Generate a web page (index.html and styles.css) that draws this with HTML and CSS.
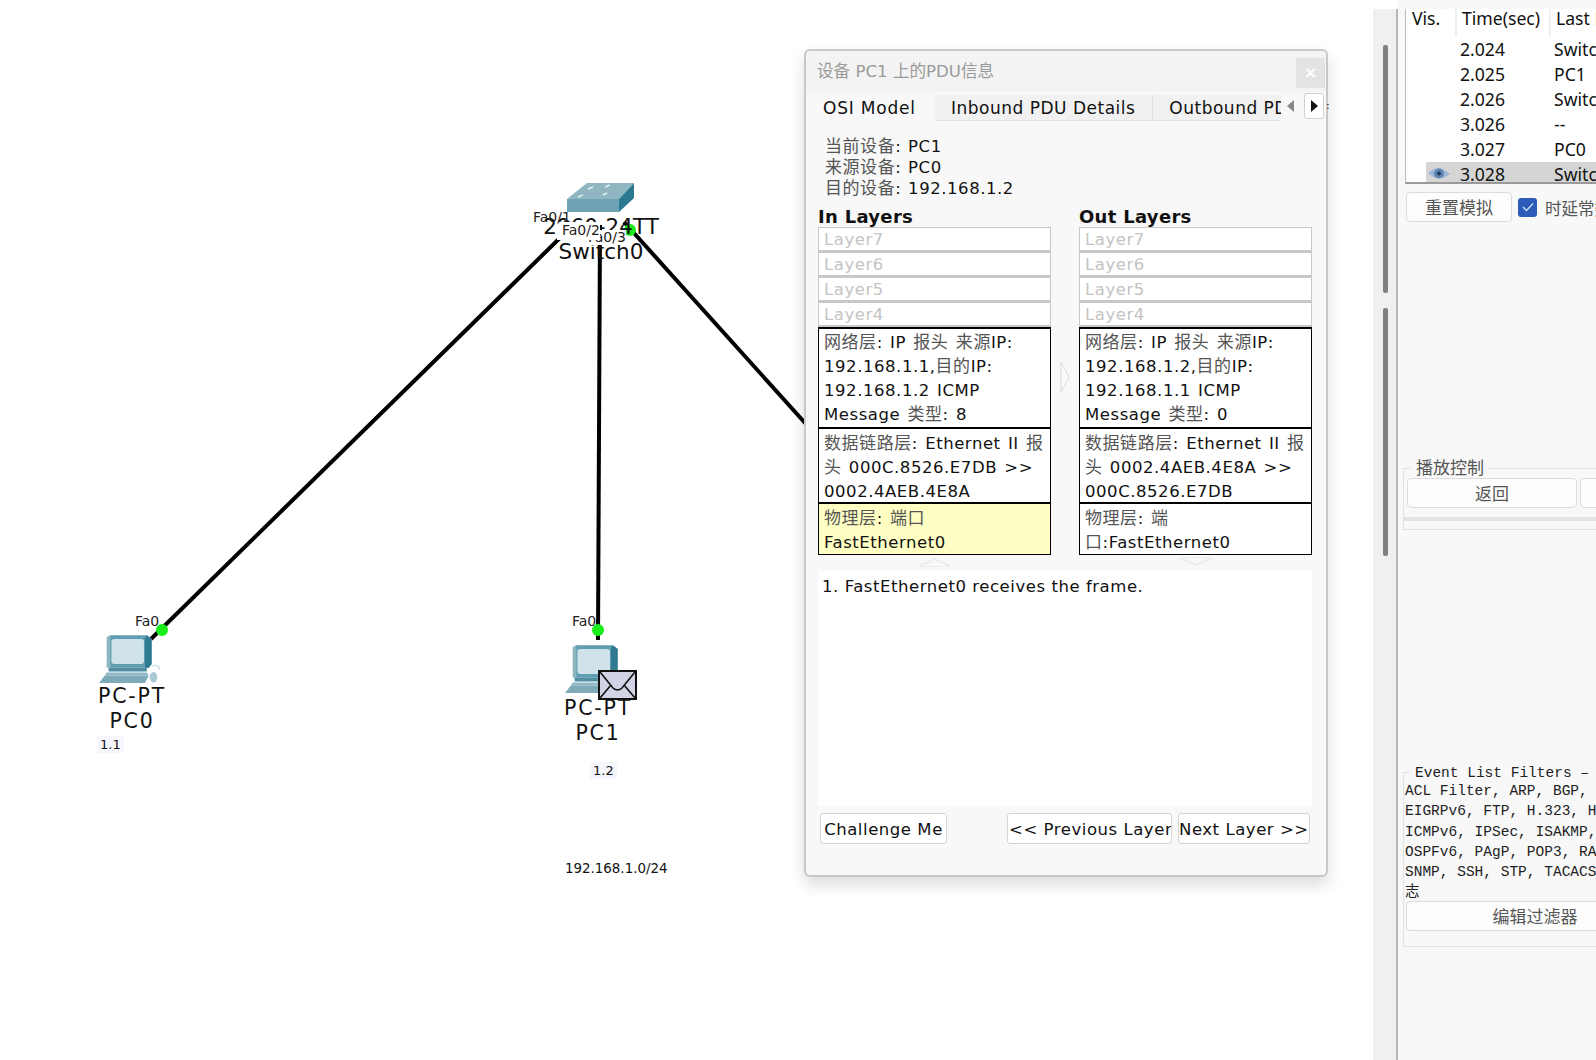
FILE: index.html
```html
<!DOCTYPE html>
<html lang="zh">
<head>
<meta charset="utf-8">
<title>Packet Tracer</title>
<link rel="stylesheet" href="styles.css">
</head>
<body>
<svg width="0" height="0" class="defs">
  <symbol id="pc" viewBox="0 0 70 56">
    <path d="M11 0H50L55 4V30L52 34H11Z" fill="#5f9db0"/>
    <path d="M50 0L55 4V30L52 34H48V3Z" fill="#2f7a90"/>
    <rect x="13" y="4" width="34" height="26" rx="3" fill="#cfe2e9"/>
    <path d="M8 2L12 0V34H8Z" fill="#8db6c3"/>
    <path d="M10 34H50V38H10Z" fill="#4f8ea3"/>
    <path d="M8 39H50L52 42H6Z" fill="#8fb9c6"/>
    <path d="M6 42H52L48 50H0Z" fill="#7fabb9"/>
    <path d="M56 32Q63 30 63 36" fill="none" stroke="#c8dbe1" stroke-width="1.5"/>
    <ellipse cx="57" cy="44" rx="4" ry="5.5" fill="#a9c8d2"/>
  </symbol>
</svg>

<main class="canvas">
  <svg class="links" width="1373" height="1060">
    <path class="link" d="M151 639L566 232"/>
    <path class="link" d="M600 225L598 640"/>
    <path class="link" d="M624 222L806 424"/>
    <circle class="dot" cx="162" cy="630" r="6"/>
    <circle class="dot" cx="598" cy="630" r="6"/>
    <circle class="dot" cx="630" cy="230" r="6"/>
    <path d="M567 199L587 183H634L619 199Z" fill="#8fb6c1"/>
    <path d="M567 199H619V212H567Z" fill="#6ea3b6"/>
    <path d="M619 199L634 183V198L619 212Z" fill="#2c7a91"/>
    <path d="M578 197l5-2m5-6l5-2m10 8l4-2m-2-6l5-2" stroke="#e3eef2" stroke-width="1.6" fill="none"/>
    <use href="#pc" x="99" y="635" width="67" height="54"/>
    <use href="#pc" x="565" y="645" width="67" height="54"/>
  </svg>

  <div class="node name sw-model">2960-24TT</div>
  <div class="node name sw-name">Switch0</div>
  <div class="node port p3">Fa0/3</div>
  <div class="node port p2">Fa0/2</div>
  <div class="node port p1">Fa0/1</div>

  <div class="node name pc pc0a">PC-PT</div>
  <div class="node name pc pc0b">PC0</div>
  <div class="node port p4">Fa0</div>
  <div class="node note n1">1.1</div>

  <div class="node name pc pc1a">PC-PT</div>
  <div class="node name pc pc1b">PC1</div>
  <div class="node port p5">Fa0</div>
  <div class="node note n2">1.2</div>
  <div class="node net">192.168.1.0/24</div>

  <svg class="node env" width="39" height="30" viewBox="0 0 39 30">
    <rect x="1" y="1" width="37" height="28" fill="#d3d3e6" stroke="#111" stroke-width="2"/>
    <path d="M2 2L15 18Q19.500 22 24 18L37 2M2 28L13 15M37 28L26 15" fill="none" stroke="#111" stroke-width="1.600"/>
  </svg>

  <section class="dialog">
    <header class="dialog-title">
      <span>设备 PC1 上的PDU信息</span>
      <span class="close">×</span>
    </header>
    <nav class="tabbar">
      <div class="tabs">
        <span class="tab active">OSI Model</span>
        <span class="tab">Inbound PDU Details</span>
        <span class="tab">Outbound PDU Details</span>
      </div>
      <span class="arrow off"><svg width="8" height="12"><path d="M7 0V12L0 6Z" fill="#888"/></svg></span>
      <span class="arrow"><svg width="8" height="12"><path d="M1 0V12L8 6Z" fill="#111"/></svg></span>
      <span class="tab-rest">:</span>
    </nav>
    <div class="body">
      <div class="device"><span class="zh">当前设备</span>: PC1<br><span class="zh">来源设备</span>: PC0<br><span class="zh">目的设备</span>: 192.168.1.2</div>
      <div class="layers">
        <div class="col">
          <h3>In Layers</h3>
          <div class="layer empty">Layer7</div>
          <div class="layer empty">Layer6</div>
          <div class="layer empty">Layer5</div>
          <div class="layer empty">Layer4</div>
          <div class="layer net4"><span class="zh">网络层</span>: IP <span class="zh">报头 来源</span>IP:<br>192.168.1.1,<span class="zh">目的</span>IP:<br>192.168.1.2 ICMP<br>Message <span class="zh">类型</span>: 8</div>
          <div class="layer link3"><span class="zh">数据链路层</span>: Ethernet II <span class="zh">报</span><br><span class="zh">头</span> 000C.8526.E7DB &gt;&gt;<br>0002.4AEB.4E8A</div>
          <div class="layer phy2 selected"><span class="zh">物理层</span>: <span class="zh">端口</span><br>FastEthernet0</div>
          <svg class="chev" width="32" height="10"><path d="M0 10H32V8L16 1L0 8Z" fill="#ececec"/><path d="M3 9L16 3L29 9" fill="#f8f8f8"/></svg>
        </div>
        <div class="mid">
          <svg width="10" height="32"><path d="M1 1L9 16L1 31Z" fill="#fbfbfb" stroke="#dcdcdc"/></svg>
        </div>
        <div class="col">
          <h3>Out Layers</h3>
          <div class="layer empty">Layer7</div>
          <div class="layer empty">Layer6</div>
          <div class="layer empty">Layer5</div>
          <div class="layer empty">Layer4</div>
          <div class="layer net4"><span class="zh">网络层</span>: IP <span class="zh">报头 来源</span>IP:<br>192.168.1.2,<span class="zh">目的</span>IP:<br>192.168.1.1 ICMP<br>Message <span class="zh">类型</span>: 0</div>
          <div class="layer link3"><span class="zh">数据链路层</span>: Ethernet II <span class="zh">报</span><br><span class="zh">头</span> 0002.4AEB.4E8A &gt;&gt;<br>000C.8526.E7DB</div>
          <div class="layer phy2"><span class="zh">物理层</span>: <span class="zh">端</span><br><span class="zh">口</span>:FastEthernet0</div>
          <svg class="chev" width="32" height="10"><path d="M0 0H32V2L16 9L0 2Z" fill="#ececec"/><path d="M3 1L16 7L29 1" fill="#f8f8f8"/></svg>
        </div>
      </div>
      <div class="desc">1. FastEthernet0 receives the frame.</div>
      <div class="actions">
        <button class="btn challenge">Challenge Me</button>
        <button class="btn prev"><span>&lt;&lt; Previous Layer</span></button>
        <button class="btn next"><span>Next Layer &gt;&gt;</span></button>
      </div>
    </div>
  </section>
</main>

<div class="strip">
  <div class="thumb t1"></div>
  <div class="thumb t2"></div>
</div>

<aside class="panel">
  <div class="inner">
    <div class="events">
      <div class="row head"><span class="vis">Vis.</span><span class="time">Time(sec)</span><span class="last">Last Device</span></div>
      <div class="row"><span class="vis"></span><span class="time">2.024</span><span class="last">Switch0</span></div>
      <div class="row"><span class="vis"></span><span class="time">2.025</span><span class="last">PC1</span></div>
      <div class="row"><span class="vis"></span><span class="time">2.026</span><span class="last">Switch0</span></div>
      <div class="row"><span class="vis"></span><span class="time">3.026</span><span class="last">--</span></div>
      <div class="row"><span class="vis"></span><span class="time">3.027</span><span class="last">PC0</span></div>
      <div class="row current"><span class="vis"><svg width="22" height="14" viewBox="0 0 22 14"><path d="M0 6Q10 -4 22 7Q11 16 0 6Z" fill="#9db8d6"/><ellipse cx="11" cy="6.500" rx="5" ry="5" fill="#5f84b4"/><circle cx="11" cy="6.500" r="2" fill="#22385a"/></svg></span><span class="time">3.028</span><span class="last">Switch0</span></div>
    </div>
    <div class="sim-row">
      <button class="pbtn reset">重置模拟</button>
      <span class="check"><svg width="12" height="10"><path d="M1 5L4.500 8.500L11 1.500" fill="none" stroke="#cfe0f7" stroke-width="1.300"/></svg></span>
      <span class="check-label">时延常数</span>
    </div>
    <div class="group play">
      <span class="legend">播放控制</span>
      <div class="play-row">
        <button class="pbtn back">返回</button>
        <button class="pbtn forward">前进</button>
      </div>
      <div class="rail"></div>
    </div>
    <div class="group filters">
      <span class="legend mono-legend">Event List Filters – Visible Events</span>
      <div class="filter-text">ACL Filter, ARP, BGP, CAPWAP, CDP, DHCP<br>EIGRPv6, FTP, H.323, HSRP, HTTP, ICMP,<br>ICMPv6, IPSec, ISAKMP, LACP, NTP, OSPF,<br>OSPFv6, PAgP, POP3, RADIUS, RIP, SCCP,<br>SNMP, SSH, STP, TACACS, TCP, TFTP, 系统日<br>志</div>
      <button class="pbtn edit">编辑过滤器</button>
    </div>
  </div>
</aside>
</body>
</html>
```

FILE: styles.css
```css
* { box-sizing: border-box; }
html, body { margin: 0; height: 1060px; overflow: hidden; }
body { display: flex; background: #fff; font-family: "DejaVu Sans", "Noto Sans CJK SC", sans-serif; color: #111; }
.defs { position: absolute; }
.zh { color: #555; font-size: 17px; line-height: 0; }

.canvas { position: relative; flex: 0 0 1373px; height: 1060px; background: #fff; }
.links { position: absolute; left: 0; top: 0; }
.link { stroke: #000; stroke-width: 4; fill: none; }
.dot { fill: #1aee1a; }
.node { position: absolute; white-space: nowrap; }
.name { font-size: 21.500px; line-height: 24px; color: #111; transform: translateX(-50%); }
.sw-model { left: 601px; top: 215px; }
.sw-name { left: 601px; top: 240px; }
.pc { font-size: 20.500px; letter-spacing: 1.800px; }
.pc0a { left: 132px; top: 684px; }
.pc0b { left: 132px; top: 709px; }
.pc1a { left: 598px; top: 696px; }
.pc1b { left: 598px; top: 721px; }
.port { font-size: 14px; line-height: 15px; color: #222; }
.p1 { left: 533px; top: 210px; }
.p2 { left: 557px; top: 222px; height: 18px; background: #fff; padding: 1px 0 0 5px; }
.p3 { left: 588px; top: 230px; background: #fff; }
.p4 { left: 135px; top: 614px; }
.p5 { left: 572px; top: 614px; }
.note { font-size: 13px; line-height: 17px; padding: 0 3px; background: #f6f6fd; }
.n1 { left: 97px; top: 736px; }
.n2 { left: 590px; top: 762px; }
.net { left: 565px; top: 861px; font-size: 13.400px; line-height: 16px; }
.env { left: 598px; top: 670px; }

.dialog { position: absolute; left: 804px; top: 49px; width: 524px; height: 828px; display: flex; flex-direction: column; background: #f8f8f8; border: 2px solid #c8c8c8; border-radius: 6px; box-shadow: 0 8px 16px rgba(0,0,0,.14); }
.dialog-title { flex: 0 0 41px; display: flex; align-items: flex-start; justify-content: space-between; padding: 11px 1px 0 11px; background: #f3f3f3; border-radius: 6px 6px 0 0; font-size: 16.600px; line-height: 20px; color: #9a9a9a; }
.close { width: 29px; height: 30px; margin-top: -4px; background: #e3e3e3; color: #fff; font-size: 16px; line-height: 30px; text-align: center; font-weight: bold; }
.tabbar { flex: 0 0 31px; display: flex; align-items: flex-start; font-size: 17px; line-height: 26px; letter-spacing: .5px; }
.tabs { flex: 0 0 475px; display: flex; overflow: hidden; height: 29px; align-items: flex-end; }
.tab { flex: none; height: 26px; padding: 0 17px 0 16px; background: #f1f1f1; border-right: 1px solid #e4e4e4; border-bottom: 1px solid #e4e4e4; white-space: nowrap; }
.tab.active { height: 29px; padding: 0 0 0 17px; background: #f8f8f8; border: 0; line-height: 32px; width: 129px; letter-spacing: .8px; }
.arrow { flex: 0 0 20px; height: 26px; margin: 1px 2px 0 0; display: flex; align-items: center; justify-content: center; background: #f8f8f8; border-radius: 3px; }
.arrow.off { margin-right: 3px; }
.arrow:not(.off) { background: #fff; border: 1px solid #d0d0d0; }
.tab-rest { flex: none; font-size: 11px; line-height: 28px; }
.body { flex: 1; padding: 0 14px 0 12px; display: flex; flex-direction: column; min-height: 0; }
.device { margin: 13px 0 0 7px; font-size: 16.500px; line-height: 21px; letter-spacing: .55px; word-spacing: 1px; height: 63px; }
.layers { display: grid; grid-template-columns: 233px 28px 233px; margin-top: 8px; }
.col { display: flex; flex-direction: column; }
.col h3 { margin: 0; font-size: 18px; line-height: 19px; height: 20px; font-weight: bold; letter-spacing: .3px; }
.layer { background: #fff; padding: 0 5px; border: 1px solid #000; font-size: 16.500px; line-height: 24px; white-space: nowrap; letter-spacing: .55px; word-spacing: 1.500px; overflow: hidden; margin-top: -1px; }
.layer.empty { height: 25px; margin-top: 0; border: 1px solid #c8c8c8; border-width: 1px 1px 2px; color: #c4c4c4; line-height: 24px; }
.net4 { height: 101px; margin-top: 0; border-width: 2px 1px 1px; padding-top: 2px; }
.link3 { height: 76px; padding-top: 3px; border-width: 2px 1px 1px; }
.phy2 { height: 53px; padding-top: 3px; border-width: 2px 1px 1px; }
.selected { background: #ffffc4; }
.chev { align-self: center; margin-top: 2px; }
.mid { display: flex; justify-content: center; padding-top: 154px; }
.desc { flex: 0 0 235px; margin-top: 4px; padding: 5px 4px; background: #fff; font-size: 16.500px; line-height: 22px; letter-spacing: .55px; }
.actions { display: flex; padding: 7px 2px 0; }
.btn { height: 31px; padding: 0; background: #fff; border: 1px solid #d4d4d4; border-radius: 3px; font: 16.500px/31px "DejaVu Sans", sans-serif; letter-spacing: .55px; color: #111; white-space: nowrap; overflow: hidden; display: flex; justify-content: center; }
.challenge { width: 127px; margin-right: 60px; }
.prev { width: 165px; margin-right: 6px; justify-content: flex-start; padding-left: 1px; }
.next { width: 132px; justify-content: flex-start; }

.strip { position: relative; flex: 0 0 25px; margin-top: 9px; background: #f0f0f0; border-right: 2px solid #b4b8ba; }
.thumb { position: absolute; left: 10px; width: 5px; background: #808080; border-radius: 2px; }
.t1 { top: 36px; height: 248px; }
.t2 { top: 299px; height: 248px; }

.panel { flex: 1; min-width: 0; overflow: hidden; background: #f8f8f8; padding: 9px 0 0 7px; }
.inner { width: 420px; font-family: "Noto Sans", "Noto Sans CJK SC", sans-serif; }
.events { height: 175px; background: #fff; border-bottom: 2px solid #9a9a9a; border-left: 1px solid #bbb; overflow: hidden; font-size: 17.600px; }
.row { display: flex; height: 25px; line-height: 24px; }
.head { height: 28px; line-height: 18px; color: #111; }
.vis { flex: 0 0 49px; padding-left: 6px; }
.time { flex: 0 0 94px; padding-left: 5px; }
.last { flex: 1; padding-left: 5px; }
.head .time, .head .last { border-left: 2px solid #efefef; }
.row .vis svg { margin-left: 16px; }
.current { height: 22px; line-height: 24px; background: linear-gradient(90deg, transparent 20px, #d5d5d5 20px); }
.sim-row { display: flex; align-items: center; height: 30px; margin: 8px 0 0 1px; }
.pbtn { height: 30px; background: #fdfdfd; border: 1px solid #dcdcdc; border-radius: 4px; padding: 0; font: 17px/26px "Noto Sans CJK SC", sans-serif; color: #555; }
.reset { flex: 0 0 106px; }
.check { flex: 0 0 19px; height: 19px; margin: 0 8px 0 6px; display: flex; align-items: center; justify-content: center; background: #2b5cb8; border-radius: 3px; }
.check-label { font-size: 16.500px; color: #555; white-space: nowrap; position: relative; top: 1px; }
.group { position: relative; border: 1px solid #e2e2e2; }
.legend { position: absolute; left: 7px; top: -12px; padding: 0 5px; background: #f8f8f8; font: 17px/20px "Noto Sans CJK SC", sans-serif; color: #555; white-space: nowrap; }
.play { height: 62px; margin: 246px 0 0 -2px; padding: 9px 0 0 3px; }
.play-row { display: flex; gap: 3px; }
.back { flex: 0 0 170px; }
.forward { flex: 0 0 170px; }
.rail { height: 4px; margin: 9px 0 0 -3px; background: #e4e4e4; }
.filters { height: 175px; margin: 242px 0 0 -2px; padding: 8px 0 0; }
.mono-legend { left: 6px; top: -9px; font: 14.500px/18px "Liberation Mono", "Noto Sans CJK SC", monospace; color: #222; }
.filter-text { padding-left: 1px; font: 14.500px/20.300px "Liberation Mono", "Noto Sans CJK SC", monospace; color: #222; white-space: nowrap; }
.edit { display: block; width: 258px; margin: -2px 0 0 2px; }
```
